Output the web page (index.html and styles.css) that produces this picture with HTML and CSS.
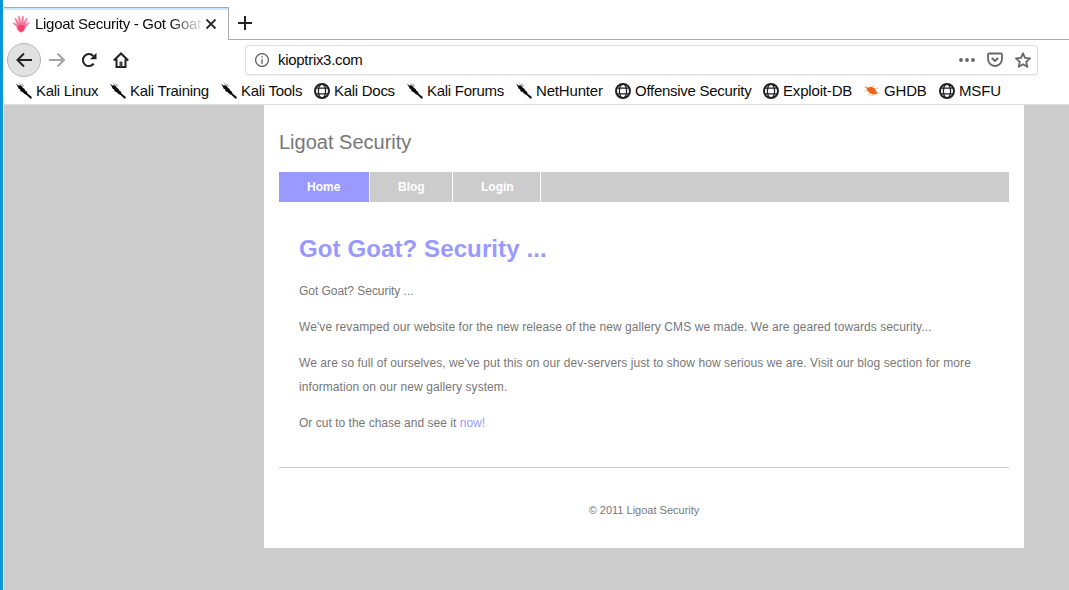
FILE: index.html
```html
<!DOCTYPE html>
<html lang="en">
<head>
<meta charset="utf-8">
<title>Ligoat Security - Got Goat? Security ...</title>
<link rel="stylesheet" href="styles.css">
</head>
<body>
<svg class="symbols" aria-hidden="true">
  <symbol id="globe" viewBox="0 0 16 16"><g fill="none" stroke="#222225"><circle cx="8" cy="8" r="7" stroke-width="2"/><ellipse cx="8" cy="8" rx="3.6" ry="7" stroke-width="1.3"/><path d="M2 5.200h12M2 10.800h12" stroke-width="1.300"/></g></symbol>
  <symbol id="knife" viewBox="0 0 16 16"><path d="M0 .5 2.500 2.500 4.500 2.300 6 3.500 7 5l1.500.800.500 1.500 2 1.500.500 1.700 4.300 3.500-.500 1.700-1-.200-3.800-3.500L8.500 11 6.500 9 4.500 8.200 4.200 6.500 2.500 5.500 2 4z" fill="#080808"/><path d="M3 .5 6.500 2.500 7.500 4M6 .8l1.500 2" stroke="#888" stroke-width=".7"/></symbol>
</svg>
<div class="window">
  <div class="tabs">
    <div class="tab">
      <svg class="hand" viewBox="0 0 18 18"><path d="M5.500 15 4 11 .8 8.200l.5-.8L5 9.300 2.600 3.500l1.300-.4L6.800 8 6.200 1.300l1.400-.2L9 7.500 10.600.9l1.400.3L11.200 8l3.200-5 1.100.5-2.300 6 3.600-2.400.5.900L13.800 12 12 16l-3 1.400z" fill="#f7739b" stroke="#f9a0bb" stroke-width=".5"/><path d="m6 11 3-1.500 4 1.500-1.500 4.500L9 17.300l-2.800-2z" fill="#f2406f"/></svg>
      <span class="tab-title">Ligoat Security - Got Goat</span>
      <svg class="close" viewBox="0 0 12 12"><path d="m1.500 1.500 9 9m0-9-9 9"/></svg>
    </div>
    <div class="tab-rest"><svg class="plus" viewBox="0 0 14 14"><path d="M7 0v14M0 7h14"/></svg></div>
  </div>
  <div class="toolbar">
    <span class="back"><svg viewBox="0 0 16 16"><path d="M16 8H1.500M8 1.500 1.500 8 8 14.500"/></svg></span>
    <svg class="forward" viewBox="0 0 16 16"><path d="M0 8h14.500M8.500 1.500 15 8l-6.500 6.500"/></svg>
    <svg class="reload" viewBox="0 0 16 16"><path d="M12.700 11.700A6 6 0 1 1 12.300 4" /><path class="solid" d="M15.500.8v6.500H9z"/></svg>
    <svg class="home" viewBox="0 0 16 16"><path d="M.8 8.500 8 1.500l7.200 7M3.500 7v8h9V7"/><path class="solid" d="M6.500 9.500h3V15h-3z"/></svg>
    <div class="urlbar">
      <svg class="info" viewBox="0 0 14 14"><circle cx="7" cy="7" r="6.400"/><path d="M7 6v5M7 3.200v1.500"/></svg>
      <span class="url">kioptrix3.com</span>
      <svg class="dots" viewBox="0 0 16 16"><circle cx="2" cy="8" r="1.900"/><circle cx="8" cy="8" r="1.900"/><circle cx="14" cy="8" r="1.900"/></svg>
      <svg class="line-icon" viewBox="0 0 16 16"><path d="M2.300 1.500h11.400q1.300 0 1.300 1.300V7A7 7 0 0 1 1 7V2.800q0-1.300 1.300-1.300zM4.800 6 8 9l3.200-3"/></svg>
      <svg class="line-icon" viewBox="0 0 16 16"><path d="m8 1.300 2 4.600 5 .5-3.800 3.400 1.100 5L8 12.200l-4.300 2.600 1.100-5L1 6.400l5-.5z"/></svg>
    </div>
  </div>
  <div class="bookmarks">
    <span><svg><use href="#knife"/></svg>Kali Linux</span>
    <span><svg><use href="#knife"/></svg>Kali Training</span>
    <span><svg><use href="#knife"/></svg>Kali Tools</span>
    <span><svg><use href="#globe"/></svg>Kali Docs</span>
    <span><svg><use href="#knife"/></svg>Kali Forums</span>
    <span class="wide"><svg><use href="#knife"/></svg>NetHunter</span>
    <span><svg><use href="#globe"/></svg>Offensive Security</span>
    <span class="wide"><svg><use href="#globe"/></svg>Exploit-DB</span>
    <span class="wide"><svg viewBox="0 0 16 16"><path d="m2 3.500 2.500 1.200 2-1.200 4 1.700 2.500 4-.5 2-3.500.3-4-2L3 7z" fill="#ee6517"/><path d="m0 4 3 .5M1 8l3-1M8 4l2-2M11 6l3-1M13 9l2 2M4 11.500l3-1M7 13l3-1.500" stroke="#f6a06c" stroke-width=".8" fill="none"/></svg>GHDB</span>
    <span class="wide"><svg><use href="#globe"/></svg>MSFU</span>
  </div>
  <div class="viewport">
    <div class="page">
      <div class="brand">Ligoat Security</div>
      <nav class="menu"><a class="active">Home</a><a>Blog</a><a>Login</a></nav>
      <main class="content">
        <h1>Got Goat? Security ...</h1>
        <p class="intro">Got Goat? Security ...</p>
        <p>We've revamped our website for the new release of the new gallery CMS we made. We are geared towards security...</p>
        <p>We are so full of ourselves, we've put this on our dev-servers just to show how serious we are. Visit our blog section for more information on our new gallery system.</p>
        <p class="more">Or cut to the chase and see it <a>now!</a></p>
      </main>
      <footer class="footer">© 2011 Ligoat Security</footer>
    </div>
  </div>
</div>
</body>
</html>
```
FILE: styles.css
```css
* { box-sizing: border-box; }
body { margin: 0; height: 590px; overflow: hidden; background: #fff; font-family: "Liberation Sans", Arial, sans-serif; }
svg { display: block; flex: none; fill: none; }
.symbols { position: absolute; width: 0; height: 0; }
.window { height: 590px; border-left: 3px solid #0996dc; padding-left: 1px; display: flex; flex-direction: column; font-size: 15px; color: #0c0c0d; }

.tabs { display: flex; height: 40px; padding-top: 7px; }
.tab { width: 225px; display: flex; align-items: center; padding-left: 8px; border-top: 1px solid #aaa; border-right: 1px solid #aaa; box-shadow: inset 0 2px #cce6fa; }
.hand { width: 18px; height: 18px; }
.tab-title { width: 166px; margin-left: 5px; white-space: nowrap; line-height: 20px; letter-spacing: -.29px; -webkit-mask-image: linear-gradient(90deg, #000 134px, transparent 170px); mask-image: linear-gradient(90deg, #000 134px, transparent 170px); }
.close { width: 12px; height: 12px; margin-left: 4px; stroke: #2a2a2d; stroke-width: 1.8; }
.tab-rest { flex: 1; padding: 9px 0 0 9px; border-bottom: 1px solid #aaa; }
.plus { width: 14px; height: 14px; stroke: #222; stroke-width: 2; }

.toolbar { display: flex; align-items: center; height: 40px; padding-left: 3px; }
.back { width: 34px; height: 34px; flex: none; display: grid; place-items: center; border: 1px solid #b5b5b5; border-radius: 50%; background: #e1e1e1; }
.back svg, .forward, .reload, .home { width: 16px; height: 16px; stroke: #222225; stroke-width: 2; }
.toolbar .forward { margin-left: 8px; stroke: #a5a5a5; }
.reload, .home { margin-left: 16px; }
.solid { fill: #222225; stroke: none; }
.home .solid { fill: #444; }
.urlbar { display: flex; align-items: center; width: 793px; height: 30px; margin-left: 116px; padding: 0 6px 0 9px; border: 1px solid #ddd; border-radius: 3px; box-shadow: 0 1px 3px #0000000d; }
.info { width: 14px; height: 14px; stroke: #666; stroke-width: 1.3; }
.url { flex: 1; margin-left: 9px; padding-bottom: 2px; letter-spacing: -.3px; }
.dots { width: 16px; height: 16px; fill: #666; }
.line-icon { width: 16px; height: 16px; margin-left: 12px; stroke: #666; stroke-width: 1.8; stroke-linejoin: round; }

.bookmarks { display: grid; grid-template-columns: 94px 111px 93px 93px 109px 99px 148px 101px 75px auto; height: 25px; padding: 0 0 3px 12px; border-bottom: 1px solid #ddd; white-space: nowrap; letter-spacing: -.28px; }
.bookmarks span { display: flex; align-items: center; gap: 4px; }
.bookmarks .wide { letter-spacing: -.17px; }
.bookmarks svg { width: 16px; height: 16px; }

.viewport { flex: 1; background: #ccc; }
.page { width: 760px; height: 443px; margin-left: 260px; padding: 0 15px; background: #fff; color: #777; }
.brand { height: 67px; padding-top: 25px; font-size: 20px; line-height: 24px; }
.menu { display: grid; grid-template-columns: 91px 83px 88px; height: 30px; background: #ccc; font-size: 12px; font-weight: bold; line-height: 30px; color: #fff; }
.menu a { padding-left: 28px; border-right: 1px solid #fff; }
.menu .active { background: #99f; }
.content { height: 266px; padding: 32px 20px 0; border-bottom: 1px solid #ccc; font-size: 12px; line-height: 24px; }
.content h1 { margin: 0 0 15px; font-size: 24px; line-height: 30px; letter-spacing: .11px; color: #99f; }
.content p { margin: 0 0 12px; letter-spacing: .077px; }
.content .intro { letter-spacing: -.04px; }
.content .more { letter-spacing: .02px; }
.content a { color: #99f; }
.footer { padding-top: 30px; font-size: 11px; line-height: 24px; text-align: center; }
```
